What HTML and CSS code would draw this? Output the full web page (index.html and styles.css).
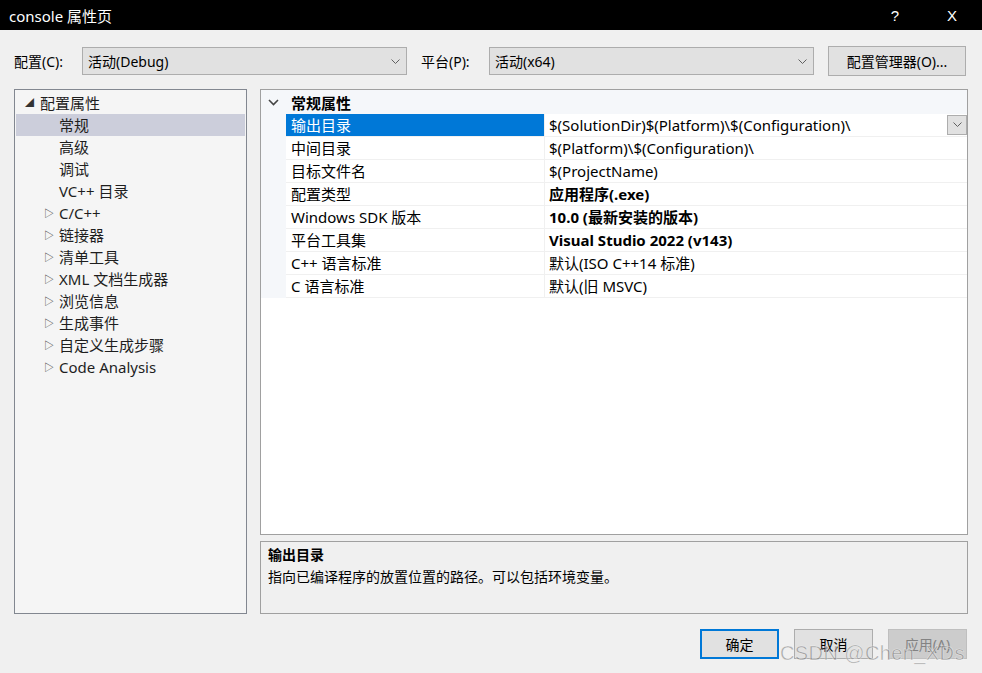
FILE: index.html
```html
<!DOCTYPE html>
<html lang="zh-CN">
<head>
    <meta charset="UTF-8">
    <title>console 属性页</title>
    <link rel="stylesheet" href="styles.css">
</head>
<body>
    <div class="dialog">
        <div class="titlebar">
            <span class="title">console 属性页</span>
            <span class="title-btn help">?</span>
            <span class="title-btn close">X</span>
        </div>

        <div class="toolbar">
            <label class="tb-label">配置(C):</label>
            <div class="combo combo-config">
                <span>活动(Debug)</span>
                <svg class="chev" width="9" height="6" viewBox="0 0 9 6"><path d="M0.5 0.5 L4.5 4.5 L8.5 0.5" fill="none" stroke="#606060" stroke-width="1"/></svg>
            </div>
            <label class="tb-label platform">平台(P):</label>
            <div class="combo combo-platform">
                <span>活动(x64)</span>
                <svg class="chev" width="9" height="6" viewBox="0 0 9 6"><path d="M0.5 0.5 L4.5 4.5 L8.5 0.5" fill="none" stroke="#606060" stroke-width="1"/></svg>
            </div>
            <button class="btn btn-manager" type="button">配置管理器(O)...</button>
        </div>

        <div class="main">
            <div class="tree">
                <div class="tree-row root"><span class="exp">&#9698;</span>配置属性</div>
                <div class="tree-row leaf selected">常规</div>
                <div class="tree-row leaf">高级</div>
                <div class="tree-row leaf">调试</div>
                <div class="tree-row leaf">VC++ 目录</div>
                <div class="tree-row node"><span class="col">&#9655;</span>C/C++</div>
                <div class="tree-row node"><span class="col">&#9655;</span>链接器</div>
                <div class="tree-row node"><span class="col">&#9655;</span>清单工具</div>
                <div class="tree-row node"><span class="col">&#9655;</span>XML 文档生成器</div>
                <div class="tree-row node"><span class="col">&#9655;</span>浏览信息</div>
                <div class="tree-row node"><span class="col">&#9655;</span>生成事件</div>
                <div class="tree-row node"><span class="col">&#9655;</span>自定义生成步骤</div>
                <div class="tree-row node"><span class="col">&#9655;</span>Code Analysis</div>
            </div>

            <div class="right">
                <div class="grid">
                    <div class="grid-head">
                        <span class="head-chev">
                            <svg width="11" height="7" viewBox="0 0 11 7"><path d="M1 1 L5.5 5.5 L10 1" fill="none" stroke="#444" stroke-width="1.6"/></svg>
                        </span>
                        <span class="head-text">常规属性</span>
                    </div>
                    <div class="grid-row">
                        <span class="margin"></span>
                        <span class="name active">输出目录</span>
                        <span class="value">$(SolutionDir)$(Platform)\$(Configuration)\
                            <span class="drop">
                                <svg width="9" height="6" viewBox="0 0 9 6"><path d="M0.5 0.5 L4.5 4.5 L8.5 0.5" fill="none" stroke="#606060" stroke-width="1"/></svg>
                            </span>
                        </span>
                    </div>
                    <div class="grid-row">
                        <span class="margin"></span>
                        <span class="name">中间目录</span>
                        <span class="value">$(Platform)\$(Configuration)\</span>
                    </div>
                    <div class="grid-row">
                        <span class="margin"></span>
                        <span class="name">目标文件名</span>
                        <span class="value">$(ProjectName)</span>
                    </div>
                    <div class="grid-row">
                        <span class="margin"></span>
                        <span class="name">配置类型</span>
                        <span class="value bold">应用程序(.exe)</span>
                    </div>
                    <div class="grid-row">
                        <span class="margin"></span>
                        <span class="name">Windows SDK 版本</span>
                        <span class="value bold">10.0 (最新安装的版本)</span>
                    </div>
                    <div class="grid-row">
                        <span class="margin"></span>
                        <span class="name">平台工具集</span>
                        <span class="value bold">Visual Studio 2022 (v143)</span>
                    </div>
                    <div class="grid-row">
                        <span class="margin"></span>
                        <span class="name">C++ 语言标准</span>
                        <span class="value">默认(ISO C++14 标准)</span>
                    </div>
                    <div class="grid-row">
                        <span class="margin"></span>
                        <span class="name">C 语言标准</span>
                        <span class="value">默认(旧 MSVC)</span>
                    </div>
                </div>

                <div class="desc">
                    <div class="desc-title">输出目录</div>
                    <div class="desc-text">指向已编译程序的放置位置的路径。可以包括环境变量。</div>
                </div>
            </div>
        </div>

        <div class="footer">
            <button class="btn btn-ok" type="button">确定</button>
            <button class="btn" type="button">取消</button>
            <button class="btn btn-disabled" type="button">应用(A)</button>
        </div>

        <div class="watermark">CSDN @Chen_XDs</div>
    </div>
</body>
</html>
```

FILE: styles.css
```css
* {
    box-sizing: border-box;
}
body {
    margin: 0;
    background: #f0f0f0;
    font-family: "Noto Sans", "Noto Sans CJK SC", sans-serif;
    color: #000;
}
.dialog {
    position: relative;
    width: 982px;
    height: 673px;
    overflow: hidden;
}

/* barre de titre */
.titlebar {
    height: 30px;
    background: #000;
    color: #fff;
    display: flex;
    align-items: center;
    padding-left: 9px;
    font-size: 15px;
}
.title {
    flex: 1;
}
.title-btn {
    text-align: center;
    font-size: 15px;
    font-family: "Liberation Sans", sans-serif;
}
.help {
    width: 30px;
    margin-right: 12px;
}
.close {
    width: 60px;
}

/* ligne configuration / plateforme */
.toolbar {
    display: flex;
    align-items: center;
    height: 31px;
    margin-top: 15px;
    padding-left: 14px;
    font-size: 14px;
}
.tb-label {
    width: 68px;
}
.platform {
    margin-left: 14px;
}
.combo {
    height: 28px;
    background: #e1e1e1;
    border: 1px solid #adadad;
    display: flex;
    align-items: center;
    justify-content: space-between;
    padding: 0 6px 0 5px;
}
.combo-config {
    width: 325px;
}
.combo-platform {
    width: 325px;
}
.chev {
    margin-top: 2px;
}
.btn {
    height: 30px;
    background: #e1e1e1;
    border: 1px solid #adadad;
    font-family: "Noto Sans", "Noto Sans CJK SC", sans-serif;
    font-size: 14px;
    color: #000;
    padding: 0;
}
.btn-manager {
    width: 138px;
    margin-left: 14px;
}

/* zone principale */
.main {
    display: flex;
    height: 525px;
    margin-top: 13px;
    padding-left: 14px;
}
.tree {
    width: 233px;
    height: 525px;
    background: #f5f5f5;
    border: 1px solid #828790;
    padding: 2px 1px 1px;
    font-size: 15px;
}
.tree-row {
    height: 22px;
    line-height: 22px;
    white-space: nowrap;
    color: #1e1e1e;
}
.root {
    padding-left: 8px;
}
.exp {
    display: inline-block;
    width: 16px;
    font-size: 9px;
    padding-left: 1px;
    vertical-align: top;
    color: #333;
}
.leaf {
    padding-left: 43px;
}
.selected {
    background: #cccedb;
}
.node {
    padding-left: 28px;
}
.col {
    display: inline-block;
    width: 15px;
    font-size: 10px;
    vertical-align: top;
    color: #333;
}

.right {
    width: 708px;
    margin-left: 13px;
    display: flex;
    flex-direction: column;
    gap: 6px;
}
.grid {
    height: 446px;
    background: #fff;
    border: 1px solid #a0a0a0;
    font-size: 15px;
}
.grid-head {
    height: 24px;
    background: #f5f7fa;
    display: flex;
    align-items: center;
}
.head-chev {
    width: 30px;
    padding-left: 7px;
    display: flex;
    align-items: center;
}
.head-text {
    font-weight: bold;
}
.grid-row {
    height: 23px;
    display: flex;
}
.margin {
    width: 25px;
    background: #f5f7fa;
}
.name {
    width: 259px;
    padding-left: 5px;
    line-height: 23px;
    border-bottom: 1px solid #f0f0f0;
    border-right: 1px solid #f0f0f0;
    white-space: nowrap;
}
.name.active {
    background: #0078d7;
    color: #fff;
}
.value {
    flex: 1;
    position: relative;
    padding-left: 4px;
    line-height: 23px;
    border-bottom: 1px solid #f0f0f0;
    white-space: nowrap;
}
.bold {
    font-weight: bold;
}
.drop {
    position: absolute;
    right: 0;
    top: 1px;
    width: 20px;
    height: 20px;
    background: #e1e1e1;
    border: 1px solid #adadad;
    display: flex;
    align-items: center;
    justify-content: center;
}

.desc {
    height: 73px;
    border: 1px solid #a0a0a0;
    padding: 2px 7px;
    font-size: 14px;
}
.desc-title {
    font-weight: bold;
    line-height: 22px;
}
.desc-text {
    line-height: 22px;
}

/* boutons du bas */
.footer {
    display: flex;
    justify-content: flex-end;
    gap: 15px;
    margin-top: 15px;
    padding-right: 15px;
}
.footer .btn {
    width: 79px;
}
.btn-ok {
    border: 2px solid #0078d7;
}
.btn-disabled {
    background: #cccccc;
    border-color: #bfbfbf;
    color: #838383;
}

.watermark {
    position: absolute;
    left: 780px;
    top: 642px;
    font-family: "Liberation Sans", sans-serif;
    font-size: 20px;
    color: rgba(110, 110, 110, 0.55);
    -webkit-text-stroke: 0.5px rgba(255, 255, 255, 0.7);
    letter-spacing: 0.4px;
}
```
